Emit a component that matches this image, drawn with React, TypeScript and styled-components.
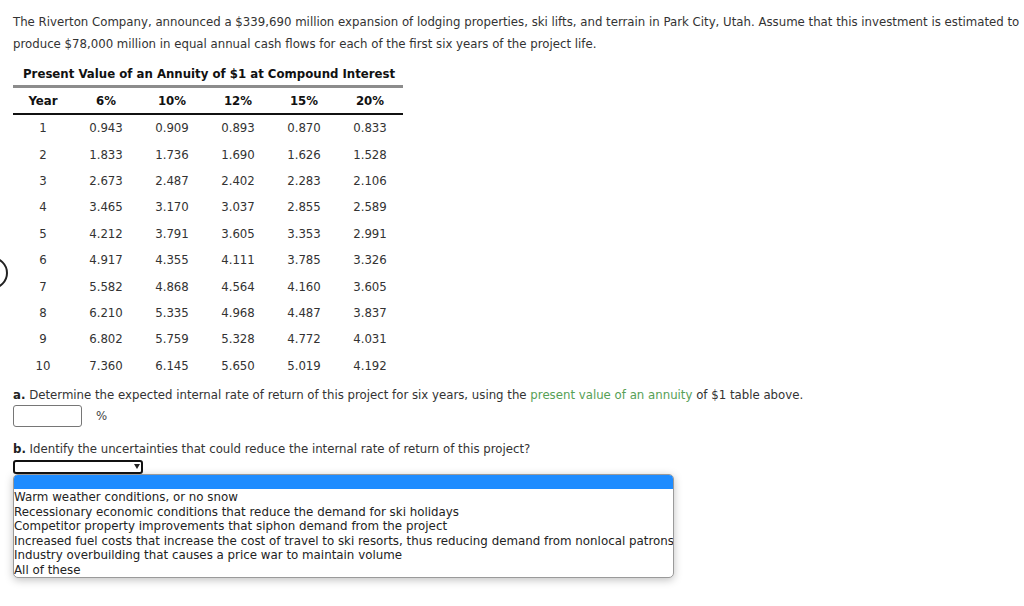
import React from 'react'
import styled, { createGlobalStyle } from 'styled-components'

const rates = ['6%', '10%', '12%', '15%', '20%']

const rows: string[][] = [
    ['0.943', '0.909', '0.893', '0.870', '0.833'],
    ['1.833', '1.736', '1.690', '1.626', '1.528'],
    ['2.673', '2.487', '2.402', '2.283', '2.106'],
    ['3.465', '3.170', '3.037', '2.855', '2.589'],
    ['4.212', '3.791', '3.605', '3.353', '2.991'],
    ['4.917', '4.355', '4.111', '3.785', '3.326'],
    ['5.582', '4.868', '4.564', '4.160', '3.605'],
    ['6.210', '5.335', '4.968', '4.487', '3.837'],
    ['6.802', '5.759', '5.328', '4.772', '4.031'],
    ['7.360', '6.145', '5.650', '5.019', '4.192'],
]

const options = [
    'Warm weather conditions, or no snow',
    'Recessionary economic conditions that reduce the demand for ski holidays',
    'Competitor property improvements that siphon demand from the project',
    'Increased fuel costs that increase the cost of travel to ski resorts, thus reducing demand from nonlocal patrons',
    'Industry overbuilding that causes a price war to maintain volume',
    'All of these',
]

const GlobalStyle = createGlobalStyle`
    html, body {
        margin: 0;
        padding: 0;
        background: #fff;
        overflow: hidden;
    }
    body {
        font-family: 'DejaVu Sans', Verdana, sans-serif;
        color: #333;
    }
`

export default function App() {
    return (
        <Page>
            <GlobalStyle />
            <EdgeRing />
            <Intro>
                The Riverton Company, announced a $339,690 million expansion of lodging properties, ski lifts, and terrain in Park City, Utah. Assume that this investment is estimated to
                <br />
                produce $78,000 million in equal annual cash flows for each of the first six years of the project life.
            </Intro>

            <TableTitle>Present Value of an Annuity of $1 at Compound Interest</TableTitle>
            <Table>
                <thead>
                    <tr>
                        <HeadCell $wide>Year</HeadCell>
                        {rates.map((r) => (
                            <HeadCell key={r}>{r}</HeadCell>
                        ))}
                    </tr>
                </thead>
                <tbody>
                    {rows.map((vals, i) => (
                        <tr key={i}>
                            <Cell>{i + 1}</Cell>
                            {vals.map((v, j) => (
                                <Cell key={j}>{v}</Cell>
                            ))}
                        </tr>
                    ))}
                </tbody>
            </Table>

            <Question>
                <b>a.</b> Determine the expected internal rate of return of this project for six years, using the{' '}
                <Link>present value of an annuity</Link> of $1 table above.
            </Question>
            <AnswerRow>
                <TextBox />
                <Unit>%</Unit>
            </AnswerRow>

            <Question $gap>
                <b>b.</b> Identify the uncertainties that could reduce the internal rate of return of this project?
            </Question>
            <SelectWrap>
                <SelectBox>
                    <Caret />
                </SelectBox>
                <Menu>
                    <Highlighted />
                    {options.map((o) => (
                        <Option key={o}>{o}</Option>
                    ))}
                </Menu>
            </SelectWrap>
        </Page>
    )
}

const Page = styled.div`
    position: relative;
    width: 1024px;
    height: 606px;
    padding: 11px 0 0 13px;
    box-sizing: border-box;
    font-size: 11.75px;
`

const EdgeRing = styled.div`
    position: absolute;
    left: -24px;
    top: 257px;
    width: 28px;
    height: 28px;
    border: 2px solid #222;
    border-radius: 50%;
`

const Intro = styled.p`
    margin: 0;
    line-height: 22px;
    white-space: nowrap;
`

const TableTitle = styled.div`
    margin: 11px 0 0 10px;
    font-weight: bold;
    color: #111;
    line-height: 16px;
`

const Table = styled.table`
    margin-top: 3px;
    border-collapse: collapse;
    border-top: 3px solid #8c8c8c;
    width: 390px;
`

const HeadCell = styled.th<{ $wide?: boolean }>`
    width: ${(p) => (p.$wide ? '60px' : '66px')};
    height: 25px;
    padding: 0;
    text-align: center;
    font-weight: bold;
    color: #111;
    border-bottom: 2px solid #111;
`

const Cell = styled.td`
    height: 26.4px;
    padding: 0;
    text-align: center;
    vertical-align: middle;
`

const Question = styled.div<{ $gap?: boolean }>`
    margin-top: ${(p) => (p.$gap ? '14px' : '8px')};
    line-height: 16px;
    white-space: nowrap;

    b {
        color: #222;
    }
`

const Link = styled.span`
    color: #56a056;
`

const AnswerRow = styled.div`
    display: flex;
    align-items: center;
    gap: 14px;
    margin-top: 2px;
`

const TextBox = styled.div`
    width: 67px;
    height: 20px;
    border: 1px solid #767676;
    border-radius: 3px;
    background: #fff;
`

const Unit = styled.span`
    color: #444;
`

const SelectWrap = styled.div`
    margin-top: 3px;
    width: 661px;
`

const SelectBox = styled.div`
    position: relative;
    width: 126px;
    height: 10px;
    border: 2px solid #111;
    border-radius: 3px;
    background: #fff;
`

const Caret = styled.div`
    position: absolute;
    right: 1px;
    top: 2px;
    width: 0;
    height: 0;
    border-left: 3px solid transparent;
    border-right: 3px solid transparent;
    border-top: 5px solid #222;
`

const Menu = styled.div`
    margin-top: 0;
    border: 1px solid #9a9a9a;
    border-radius: 5px;
    background: #fff;
    overflow: hidden;
    box-shadow: 0 2px 8px rgba(0, 0, 0, 0.25);
`

const Highlighted = styled.div`
    height: 14px;
    background: #1e8cff;
    margin-bottom: 1px;
`

const Option = styled.div`
    font-size: 11.85px;
    line-height: 14.6px;
    color: #222;
    white-space: nowrap;
`
